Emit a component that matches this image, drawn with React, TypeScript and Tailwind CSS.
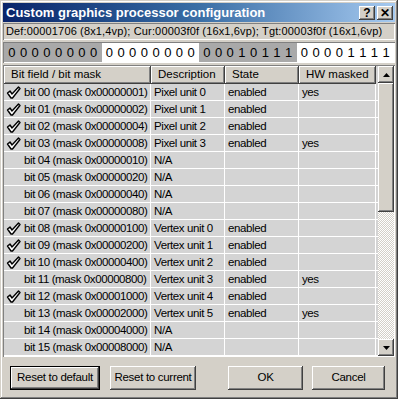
import React from 'react';

const font = { fontFamily: '"Liberation Sans", Arial, sans-serif' };

const rows = [
  { bit: '00', mask: '00000001', on: true, desc: 'Pixel unit 0', state: 'enabled', hw: 'yes' },
  { bit: '01', mask: '00000002', on: true, desc: 'Pixel unit 1', state: 'enabled', hw: '' },
  { bit: '02', mask: '00000004', on: true, desc: 'Pixel unit 2', state: 'enabled', hw: '' },
  { bit: '03', mask: '00000008', on: true, desc: 'Pixel unit 3', state: 'enabled', hw: 'yes' },
  { bit: '04', mask: '00000010', on: false, desc: 'N/A', state: '', hw: '' },
  { bit: '05', mask: '00000020', on: false, desc: 'N/A', state: '', hw: '' },
  { bit: '06', mask: '00000040', on: false, desc: 'N/A', state: '', hw: '' },
  { bit: '07', mask: '00000080', on: false, desc: 'N/A', state: '', hw: '' },
  { bit: '08', mask: '00000100', on: true, desc: 'Vertex unit 0', state: 'enabled', hw: '' },
  { bit: '09', mask: '00000200', on: true, desc: 'Vertex unit 1', state: 'enabled', hw: '' },
  { bit: '10', mask: '00000400', on: true, desc: 'Vertex unit 2', state: 'enabled', hw: '' },
  { bit: '11', mask: '00000800', on: false, desc: 'Vertex unit 3', state: 'enabled', hw: 'yes' },
  { bit: '12', mask: '00001000', on: true, desc: 'Vertex unit 4', state: 'enabled', hw: '' },
  { bit: '13', mask: '00002000', on: false, desc: 'Vertex unit 5', state: 'enabled', hw: 'yes' },
  { bit: '14', mask: '00004000', on: false, desc: 'N/A', state: '', hw: '' },
  { bit: '15', mask: '00008000', on: false, desc: 'N/A', state: '', hw: '' },
];

const groups = [
  { bits: '00000000', bg: 'bg-[#a9a9a9]' },
  { bits: '00000000', bg: 'bg-white' },
  { bits: '00010111', bg: 'bg-[#a9a9a9]' },
  { bits: '00001111', bg: 'bg-white' },
];

const raised = 'shadow-[inset_-1px_-1px_#404040,inset_1px_1px_#ffffff,inset_-2px_-2px_#808080]';
const sunken = 'shadow-[inset_1px_1px_#808080,inset_-1px_-1px_#ffffff]';

const Check = () => (
  <svg width="15" height="13" viewBox="0 0 15 13" className="shrink-0">
    <path
      d="M1.5 7 L4 5 L6 8 L12.5 1 L14 2.5 L6.5 12 L5 12 Z"
      fill="#ffffff"
      stroke="#000000"
      strokeWidth="1.4"
      strokeLinejoin="round"
    />
  </svg>
);

const Arrow = ({ up }: { up: boolean }) => (
  <div className={`w-[16px] h-[17px] bg-[#d4d0c8] ${raised} flex items-center justify-center`}>
    <svg width="7" height="4" viewBox="0 0 7 4">
      <path d={up ? 'M0 4 L3.5 0 L7 4 Z' : 'M0 0 L3.5 4 L7 0 Z'} fill="#000" />
    </svg>
  </div>
);

const Btn = ({ label, w, def }: { label: string; w: string; def?: boolean }) => (
  <div className={`${w} h-[24px] ${def ? 'border border-black' : ''} flex`}>
    <div className={`flex-1 bg-[#d4d0c8] ${raised} flex items-center justify-center text-[11.5px] tracking-[-0.3px] text-black`}>
      {label}
    </div>
  </div>
);

export default function App() {
  return (
    <div
      className="w-[398px] h-[399px] bg-[#d4d0c8] p-[3px] flex flex-col shadow-[inset_-1px_-1px_#404040,inset_1px_1px_#d4d0c8,inset_-2px_-2px_#808080,inset_2px_2px_#ffffff]"
      style={font}
    >
      {/* title bar */}
      <div className="h-[19px] flex items-center pl-[3px] pr-[2px] bg-gradient-to-r from-[#0a246a] via-[#3a6ea5] to-[#a6caf0]">
        <span className="flex-1 text-white font-bold text-[13px] leading-none">
          Custom graphics processor configuration
        </span>
        <div className="flex gap-[2px]">
          <div className={`w-[16px] h-[14px] bg-[#d4d0c8] ${raised} flex items-center justify-center text-[12px] font-bold leading-none`}>?</div>
          <div className={`w-[16px] h-[14px] bg-[#d4d0c8] ${raised} flex items-center justify-center text-[12px] font-bold leading-none`}>✕</div>
        </div>
      </div>

      {/* info */}
      <div className={`mt-[1px] h-[17px] ${sunken} flex items-center pl-[3px] text-[11px] tracking-[0.15px] text-black whitespace-nowrap`}>
        Def:00001706 (8x1,4vp); Cur:00003f0f (16x1,6vp); Tgt:00003f0f (16x1,6vp)
      </div>

      {/* bits */}
      <div className={`mt-[2px] h-[21px] ${sunken} p-[1px] flex`}>
        {groups.map((g, i) => (
          <div key={i} className={`flex-1 ${g.bg} flex justify-around items-center px-[2px] text-[13px] text-black`}>
            {g.bits.split('').map((b, j) => (
              <span key={j}>{b}</span>
            ))}
          </div>
        ))}
      </div>

      {/* table */}
      <div className={`mt-[2px] h-[292px] ${sunken} p-[1px] flex`}>
        <div className="flex-1 flex flex-col overflow-hidden bg-[#d4d4d4]">
          <div className="grid grid-cols-[147px_74px_74px_77px] h-[18px] shrink-0 text-[11.5px] text-black">
            {['Bit field / bit mask', 'Description', 'State', 'HW masked'].map((h) => (
              <div key={h} className={`bg-[#d4d0c8] ${raised} flex items-center pl-[7px] whitespace-nowrap`}>
                {h}
              </div>
            ))}
          </div>
          {rows.map((r) => (
            <div key={r.bit} className="grid grid-cols-[147px_74px_74px_77px] h-[17px] text-[11.5px] tracking-[-0.4px] text-black border-b border-white shrink-0">
              <div className="flex items-center pl-[2px] gap-[3px] border-r border-white whitespace-nowrap">
                <span className="w-[15px] flex items-center">{r.on && <Check />}</span>
                bit {r.bit} (mask 0x{r.mask})
              </div>
              <div className="flex items-center pl-[3px] border-r border-white whitespace-nowrap overflow-hidden">{r.desc}</div>
              <div className="flex items-center pl-[3px] border-r border-white">{r.state}</div>
              <div className="flex items-center pl-[3px] border-r border-white">{r.hw}</div>
            </div>
          ))}
        </div>
        <div className="w-[16px] flex flex-col bg-[repeating-conic-gradient(#d4d0c8_0_25%,#ffffff_0_50%)] bg-[length:2px_2px]">
          <Arrow up />
          <div className={`h-[129px] bg-[#d4d0c8] ${raised}`} />
          <div className="flex-1" />
          <Arrow up={false} />
        </div>
      </div>

      {/* buttons */}
      <div className="mt-[9px] flex items-center pl-[7px]">
        <Btn label="Reset to default" w="w-[90px]" def />
        <div className="w-[10px]" />
        <Btn label="Reset to current" w="w-[86px]" />
        <div className="w-[32px]" />
        <Btn label="OK" w="w-[75px]" />
        <div className="w-[9px]" />
        <Btn label="Cancel" w="w-[73px]" />
      </div>
    </div>
  );
}
